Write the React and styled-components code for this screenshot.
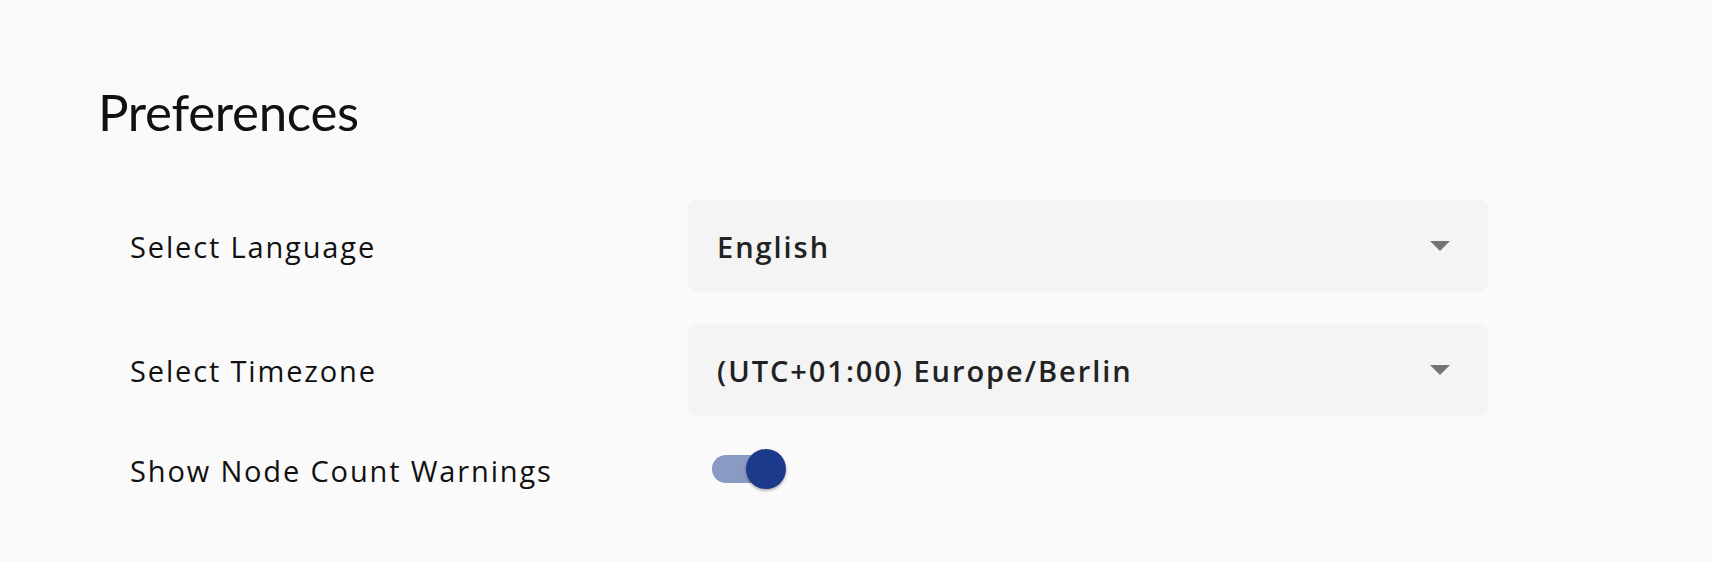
import React, { useState } from 'react'
import styled, { createGlobalStyle } from 'styled-components'

const GlobalStyle = createGlobalStyle`
  body {
    margin: 0;
    background: #fafafa;
    font-family: Lato, "Open Sans", sans-serif;
    color: #111;
  }
`

const Page = styled.div`
  padding: 82px 98px 40px;
`

const Title = styled.h1`
  margin: 0 0 58px;
  font-size: 51px;
  line-height: 60px;
  font-weight: 400;
  letter-spacing: -0.3px;
  color: #111;
`

const Rows = styled.div`
  display: flex;
  flex-direction: column;
  gap: 32px;
  padding-left: 32px;
`

const Row = styled.div`
  display: grid;
  grid-template-columns: 558px 800px;
  align-items: center;
  min-height: ${(p) => p.$height}px;
`

const Label = styled.span`
  font-family: "Open Sans", sans-serif;
  font-size: 29px;
  letter-spacing: 1.85px;
  color: #111;
`

const Select = styled.div`
  height: 92px;
  box-sizing: border-box;
  padding: 0 38px 0 29px;
  display: flex;
  align-items: center;
  justify-content: space-between;
  background: #f4f4f4;
  border-radius: 8px;
  cursor: pointer;
`

const Value = styled.span`
  font-family: "Open Sans", sans-serif;
  font-size: 29px;
  font-weight: 600;
  letter-spacing: 1.95px;
  color: #222;
`

const Caret = styled.span`
  width: 0;
  height: 0;
  border-left: 10px solid transparent;
  border-right: 10px solid transparent;
  border-top: 10px solid #757575;
`

const Switch = styled.button`
  position: relative;
  width: 68px;
  height: 28px;
  margin-left: 24px;
  padding: 0;
  border: none;
  border-radius: 14px;
  background: ${(p) => (p.$on ? '#8a9ac3' : '#c4c4c4')};
  cursor: pointer;
`

const Thumb = styled.span`
  position: absolute;
  top: -6px;
  left: ${(p) => (p.$on ? '34px' : '-6px')};
  width: 40px;
  height: 40px;
  border-radius: 50%;
  background: ${(p) => (p.$on ? '#1b3a8c' : '#fafafa')};
  box-shadow: 0 2px 2px rgba(0, 0, 0, 0.2), 0 1px 4px rgba(0, 0, 0, 0.14);
`

const Dropdown = ({ value }) => (
  <Select>
    <Value>{value}</Value>
    <Caret />
  </Select>
)

export default function App() {
  const [warnings, setWarnings] = useState(true)

  return (
    <>
      <GlobalStyle />
      <Page>
        <Title>Preferences</Title>
        <Rows>
          <Row $height={92}>
            <Label>Select Language</Label>
            <Dropdown value="English" />
          </Row>
          <Row $height={92}>
            <Label>Select Timezone</Label>
            <Dropdown value="(UTC+01:00) Europe/Berlin" />
          </Row>
          <Row $height={44}>
            <Label>Show Node Count Warnings</Label>
            <div>
              <Switch type="button" $on={warnings} onClick={() => setWarnings(!warnings)}>
                <Thumb $on={warnings} />
              </Switch>
            </div>
          </Row>
        </Rows>
      </Page>
    </>
  )
}
